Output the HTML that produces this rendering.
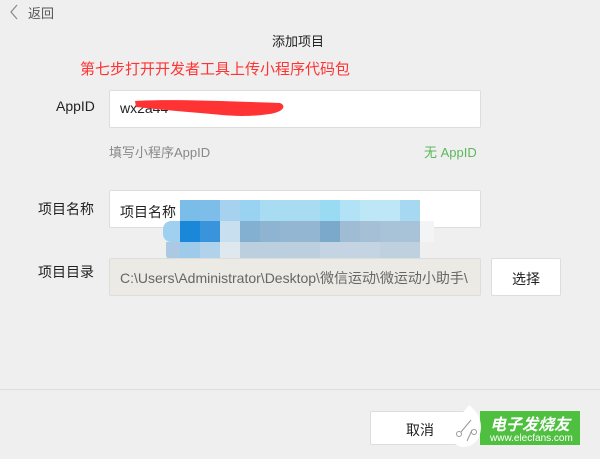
<!DOCTYPE html>
<html><head><meta charset="utf-8"><style>
body{margin:0;width:600px;height:459px;background:#efefef;position:relative;overflow:hidden;font-family:"Liberation Sans","Noto Sans CJK SC",sans-serif;font-size:14px;color:#222}
.a{position:absolute}
.inp{position:absolute;background:#fff;border:1px solid #ddd;border-radius:2px;box-sizing:border-box}
.m{position:absolute;left:163px;top:200px;width:275px;height:68px}
.m div{position:absolute;width:20px;height:21px}
</style></head><body>
<svg class="a" style="left:8px;top:3px" width="12" height="18"><path d="M9 2 L3 9 L9 16" stroke="#888" stroke-width="1.2" fill="none"/></svg>
<div class="a" style="left:28px;top:3px;color:#555;font-size:13px">返回</div>
<div class="a" style="left:272px;top:31px;font-size:13px">添加项目</div>
<div class="a" style="left:80px;top:58px;color:#f33;font-size:15px">第七步打开开发者工具上传小程序代码包</div>
<div class="a" style="left:56px;top:98px">AppID</div>
<div class="inp" style="left:109px;top:90px;width:372px;height:38px"></div>
<div class="a" style="left:120px;top:100px">wx2a44</div>
<svg class="a" style="left:130px;top:94px" width="160" height="30"><path d="M5 7 C40 5 90 7 150 9 C157 12 153 18 140 20 C110 24 95 21 70 19 C45 17 25 15 6 13 Z" fill="#f33"/></svg>
<div class="a" style="left:109px;top:142px;color:#888;font-size:13px">填写小程序AppID</div>
<div class="a" style="left:424px;top:142px;color:#5cb85c;font-size:13px">无 AppID</div>
<div class="a" style="left:38px;top:199px">项目名称</div>
<div class="inp" style="left:109px;top:190px;width:372px;height:38px"></div>
<div class="a" style="left:120px;top:202px">项目名称</div>
<div class="m">
<div style="left:17px;top:0;background:#7bbde9"></div><div style="left:37px;top:0;background:#7dbde9"></div><div style="left:57px;top:0;background:#a6d2f0"></div><div style="left:77px;top:0;background:#9ad3f2"></div><div style="left:97px;top:0;background:#a8dcf3"></div><div style="left:117px;top:0;background:#a8dcf3"></div><div style="left:137px;top:0;background:#a8dcf3"></div><div style="left:157px;top:0;background:#98dbf3"></div><div style="left:177px;top:0;background:#b2e2f5"></div><div style="left:197px;top:0;background:#bde7f7"></div><div style="left:217px;top:0;background:#bde7f7"></div><div style="left:237px;top:0;background:#a6d8f2"></div>
<div style="left:0;top:21px;background:#a0d0f0;width:17px;border-radius:8px 0 0 8px"></div><div style="left:17px;top:21px;background:#1b87d8"></div><div style="left:37px;top:21px;background:#3a94db"></div><div style="left:57px;top:21px;background:#c8dff0"></div><div style="left:77px;top:21px;background:#83afd0"></div><div style="left:97px;top:21px;background:#8fb4d2"></div><div style="left:117px;top:21px;background:#93b6d2"></div><div style="left:137px;top:21px;background:#93b6d2"></div><div style="left:157px;top:21px;background:#7aa9cc"></div><div style="left:177px;top:21px;background:#a0bcd4"></div><div style="left:197px;top:21px;background:#a4bfd6"></div><div style="left:217px;top:21px;background:#a8c2d8"></div><div style="left:237px;top:21px;background:#a8c2d8"></div><div style="left:257px;top:21px;background:#f2f4f6;width:14px"></div>
<div style="left:3px;top:42px;background:#abc9e2;width:14px;height:20px;border-radius:0 0 0 8px"></div><div style="left:17px;top:42px;background:#9fcbea;height:20px"></div><div style="left:37px;top:42px;background:#b0d2ea;height:20px"></div><div style="left:57px;top:42px;background:#e0e8ef;height:20px"></div><div style="left:77px;top:42px;background:#bccfdf;height:20px;width:80px"></div><div style="left:157px;top:42px;background:#c4d4e2;height:20px;width:60px"></div><div style="left:217px;top:42px;background:#bfd0df;height:20px;width:40px"></div>
</div>
<div class="a" style="left:38px;top:262px">项目目录</div>
<div class="inp" style="left:109px;top:258px;width:372px;height:38px;background:#ebeae4;border-color:#ddd"></div>
<div class="a" style="left:120px;top:268px;color:#666;white-space:nowrap;width:355px;overflow:hidden">C:\Users\Administrator\Desktop\微信运动\微运动小助手\</div>
<div class="inp" style="left:491px;top:258px;width:70px;height:38px"></div>
<div class="a" style="left:512px;top:269px">选择</div>
<div class="a" style="left:0;top:389px;width:600px;height:1px;background:#ddd"></div>
<div class="inp" style="left:370px;top:411px;width:100px;height:34px"></div>
<div class="a" style="left:406px;top:420px">取消</div>
<div class="a" style="left:480px;top:411px;width:100px;height:34px;background:#4fbf40"></div>
<div class="a" style="left:490px;top:411px;color:#fff;font-size:16px;font-weight:bold;font-style:italic">电子发烧友</div>
<div class="a" style="left:490px;top:433px;color:#fff;font-size:10px">www.elecfans.com</div>
<svg class="a" style="left:447px;top:403px" width="45" height="48"><path d="M22 2 C30 8 34 16 34 24 C34 36 26 44 17 44 C8 44 2 36 2 28 C2 18 14 14 22 2Z" fill="#fff" opacity=".95"/><circle cx="12" cy="31" r="2.5" fill="none" stroke="#999"/><circle cx="27" cy="29" r="2.5" fill="none" stroke="#999"/><path d="M14 29 L24 17 M25 27 L20 38" stroke="#999" fill="none"/></svg>
</body></html>
